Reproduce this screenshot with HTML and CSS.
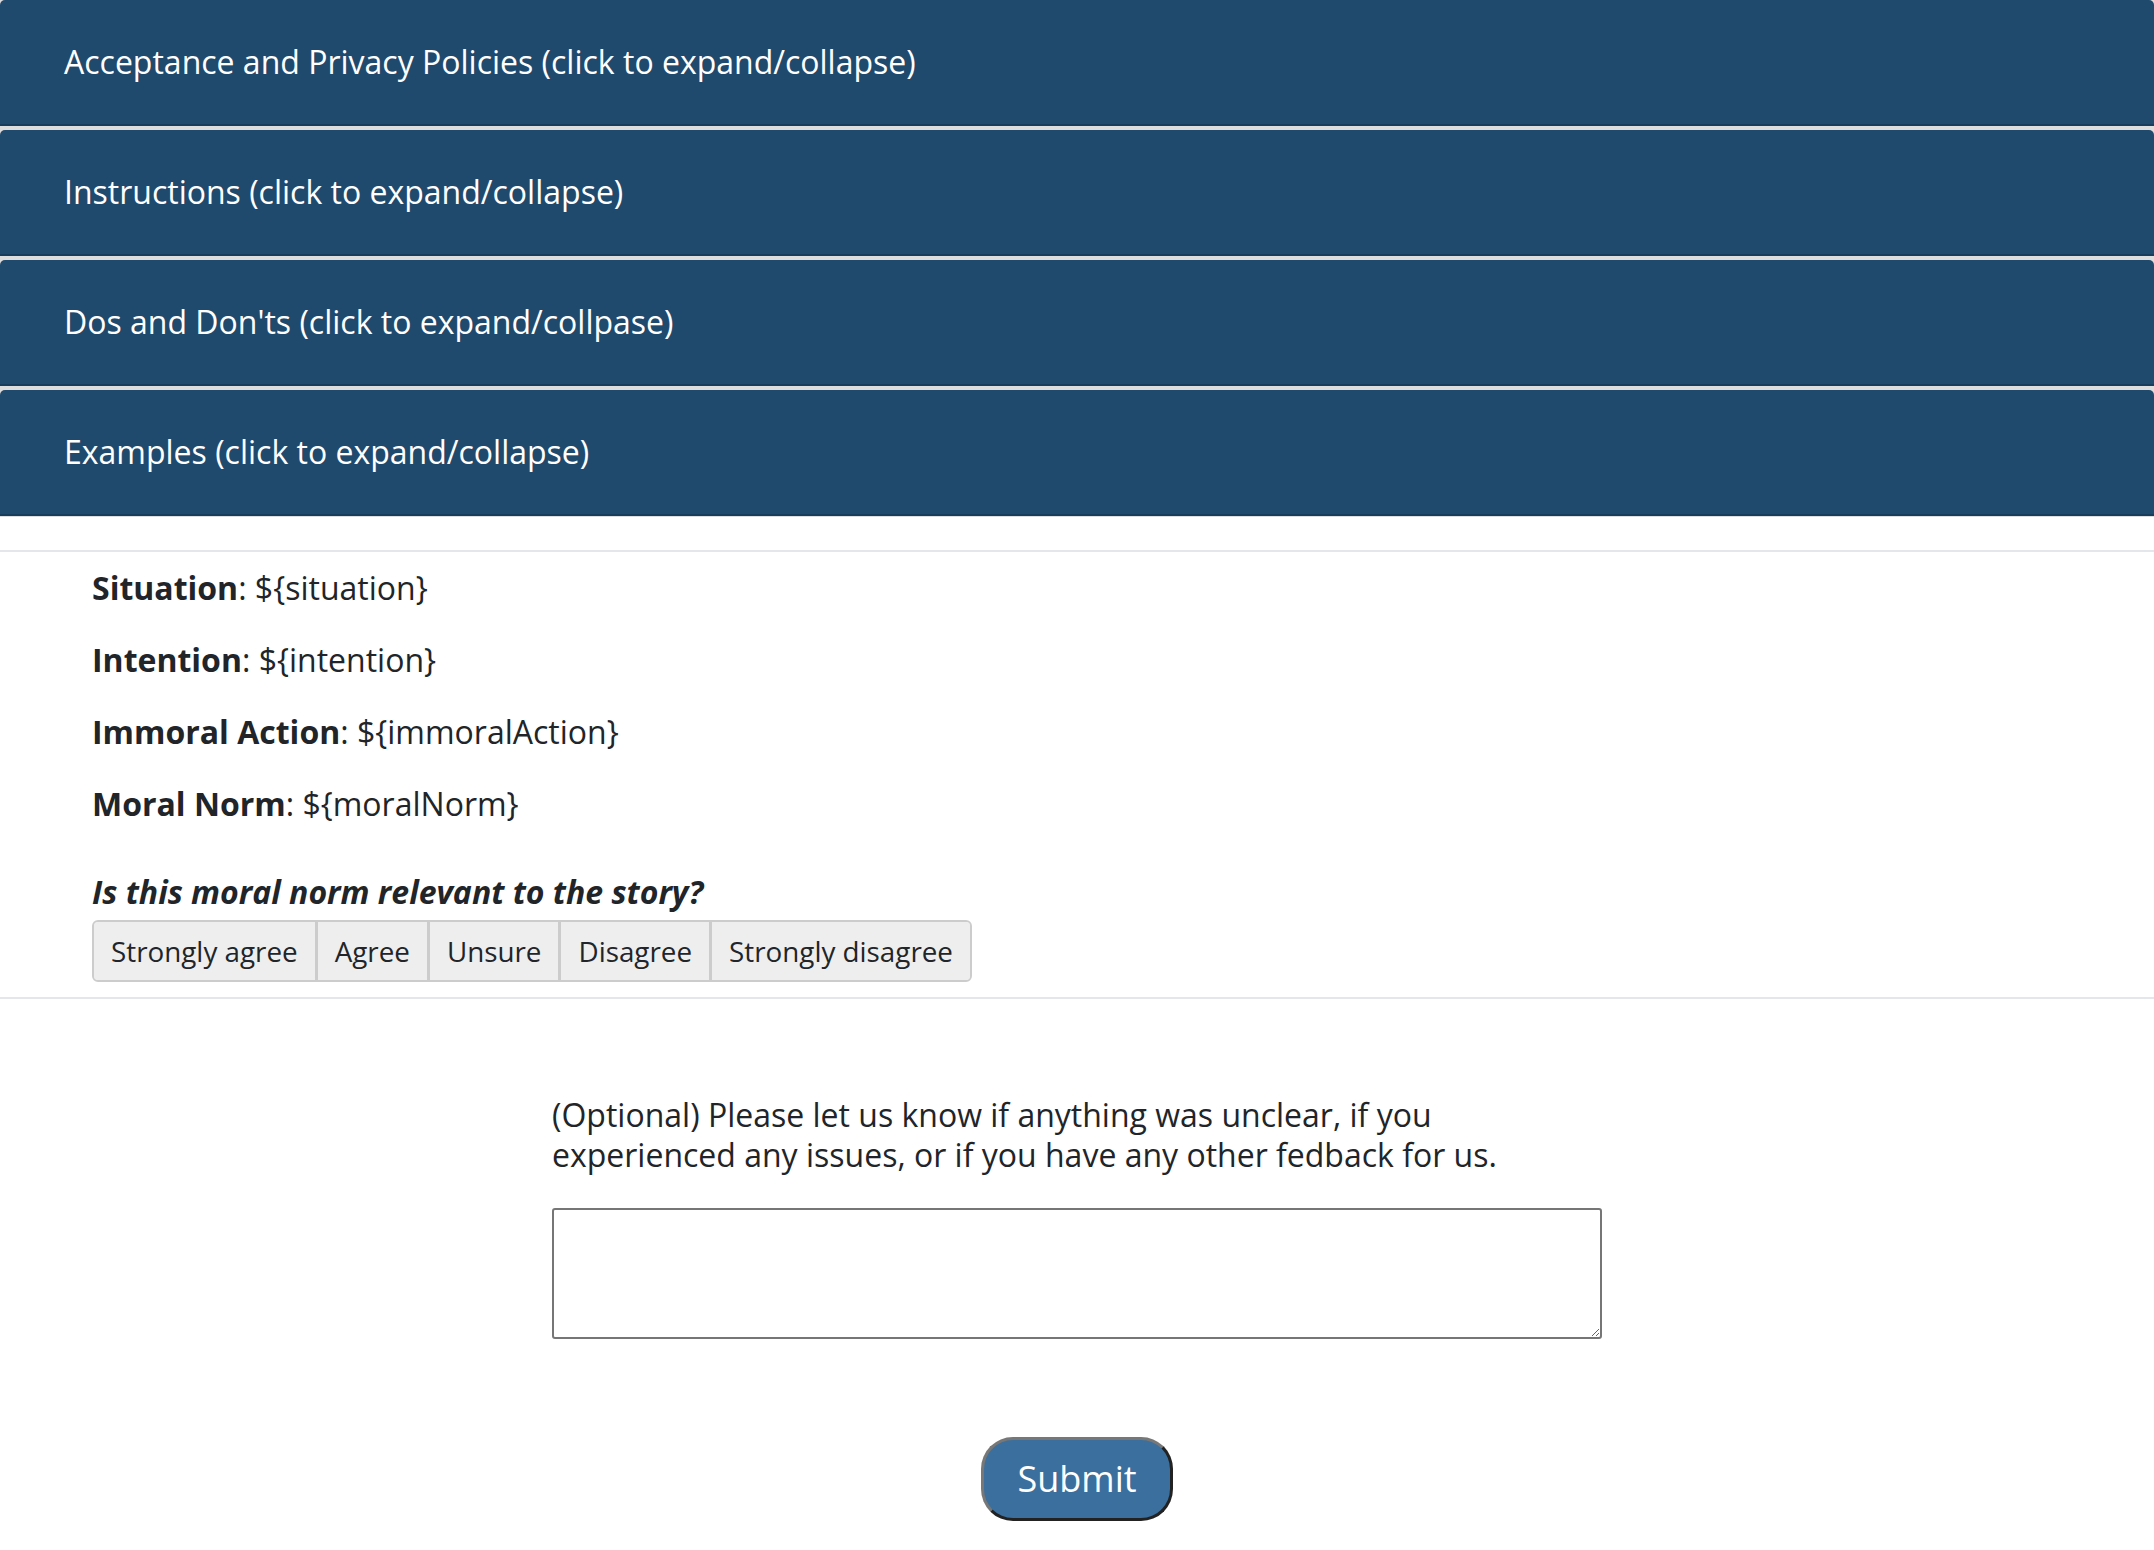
FILE: index.html
```html
<!DOCTYPE html>
<html lang="en">
<head>
  <meta charset="UTF-8">
  <meta name="viewport" content="width=device-width, initial-scale=1.0">
  <title>Moral Norm Relevance</title>
  <link rel="stylesheet" href="styles.css">
</head>
<body>
  <div class="accordion">
    <div class="acc-item">Acceptance and Privacy Policies (click to expand/collapse)</div>
    <div class="acc-item">Instructions (click to expand/collapse)</div>
    <div class="acc-item">Dos and Don'ts (click to expand/collpase)</div>
    <div class="acc-item">Examples (click to expand/collapse)</div>
  </div>

  <div class="story">
    <p><b>Situation</b>: ${situation}</p>
    <p><b>Intention</b>: ${intention}</p>
    <p><b>Immoral Action</b>: ${immoralAction}</p>
    <p><b>Moral Norm</b>: ${moralNorm}</p>

    <p class="question">Is this moral norm relevant to the story?</p>
    <div class="choices">
      <button type="button">Strongly agree</button>
      <button type="button">Agree</button>
      <button type="button">Unsure</button>
      <button type="button">Disagree</button>
      <button type="button">Strongly disagree</button>
    </div>
  </div>

  <div class="feedback">
    <label for="fb">(Optional) Please let us know if anything was unclear, if you experienced any issues, or if you have any other fedback for us.</label>
    <textarea id="fb"></textarea>
    <div class="submit-row">
      <button class="submit" type="submit">Submit</button>
    </div>
  </div>
</body>
</html>
```

FILE: styles.css
```css
body { margin: 0; font-family: 'Open Sans', 'Noto Sans', sans-serif; color: #212529; background: white; }

.accordion { display: flex; flex-direction: column; gap: 4px; background: #dddddd; padding-bottom: 1px; }
.acc-item { height: 124px; line-height: 124px; padding-left: 64px; background: #204a6d; color: white; font-size: 32px; border-bottom: 2px solid #183d5c; border-radius: 5px 5px 0 0; cursor: pointer; }

.story { margin-top: 33px; border-top: 2px solid #e3e6ea; border-bottom: 2px solid #e3e6ea; padding: 12px 0 15px 92px; font-size: 32px; }
.story p { margin: 0 0 24px; line-height: 48px; }
.story .question { margin: 40px 0 4px; font-weight: bold; font-style: italic; }

.choices { display: inline-flex; border: 2px solid #cccccc; border-radius: 6px; background: #eeeeee; overflow: hidden; }
.choices button { font-family: inherit; font-size: 27.8px; color: #212529; background: #eeeeee; border: none; border-right: 3px solid #cccccc; padding: 10px 17px; line-height: 38px; cursor: pointer; }
.choices button:last-child { border-right: none; }

.feedback { width: 1050px; margin: 96px auto 0; }
.feedback label { display: block; font-size: 32px; line-height: 40px; margin-bottom: 33px; }
.feedback textarea { display: block; box-sizing: border-box; width: 100%; height: 131px; border: 2px solid #767676; border-radius: 3px; font-family: inherit; font-size: 28px; }
.submit-row { text-align: center; margin-top: 98px; }
.submit { font-family: inherit; font-size: 36px; line-height: 50px; color: white; background: #3b6f9e; padding: 14px 33px; border: 3px solid; border-color: #777777 #222222 #222222 #777777; border-radius: 32px; cursor: pointer; }
```
